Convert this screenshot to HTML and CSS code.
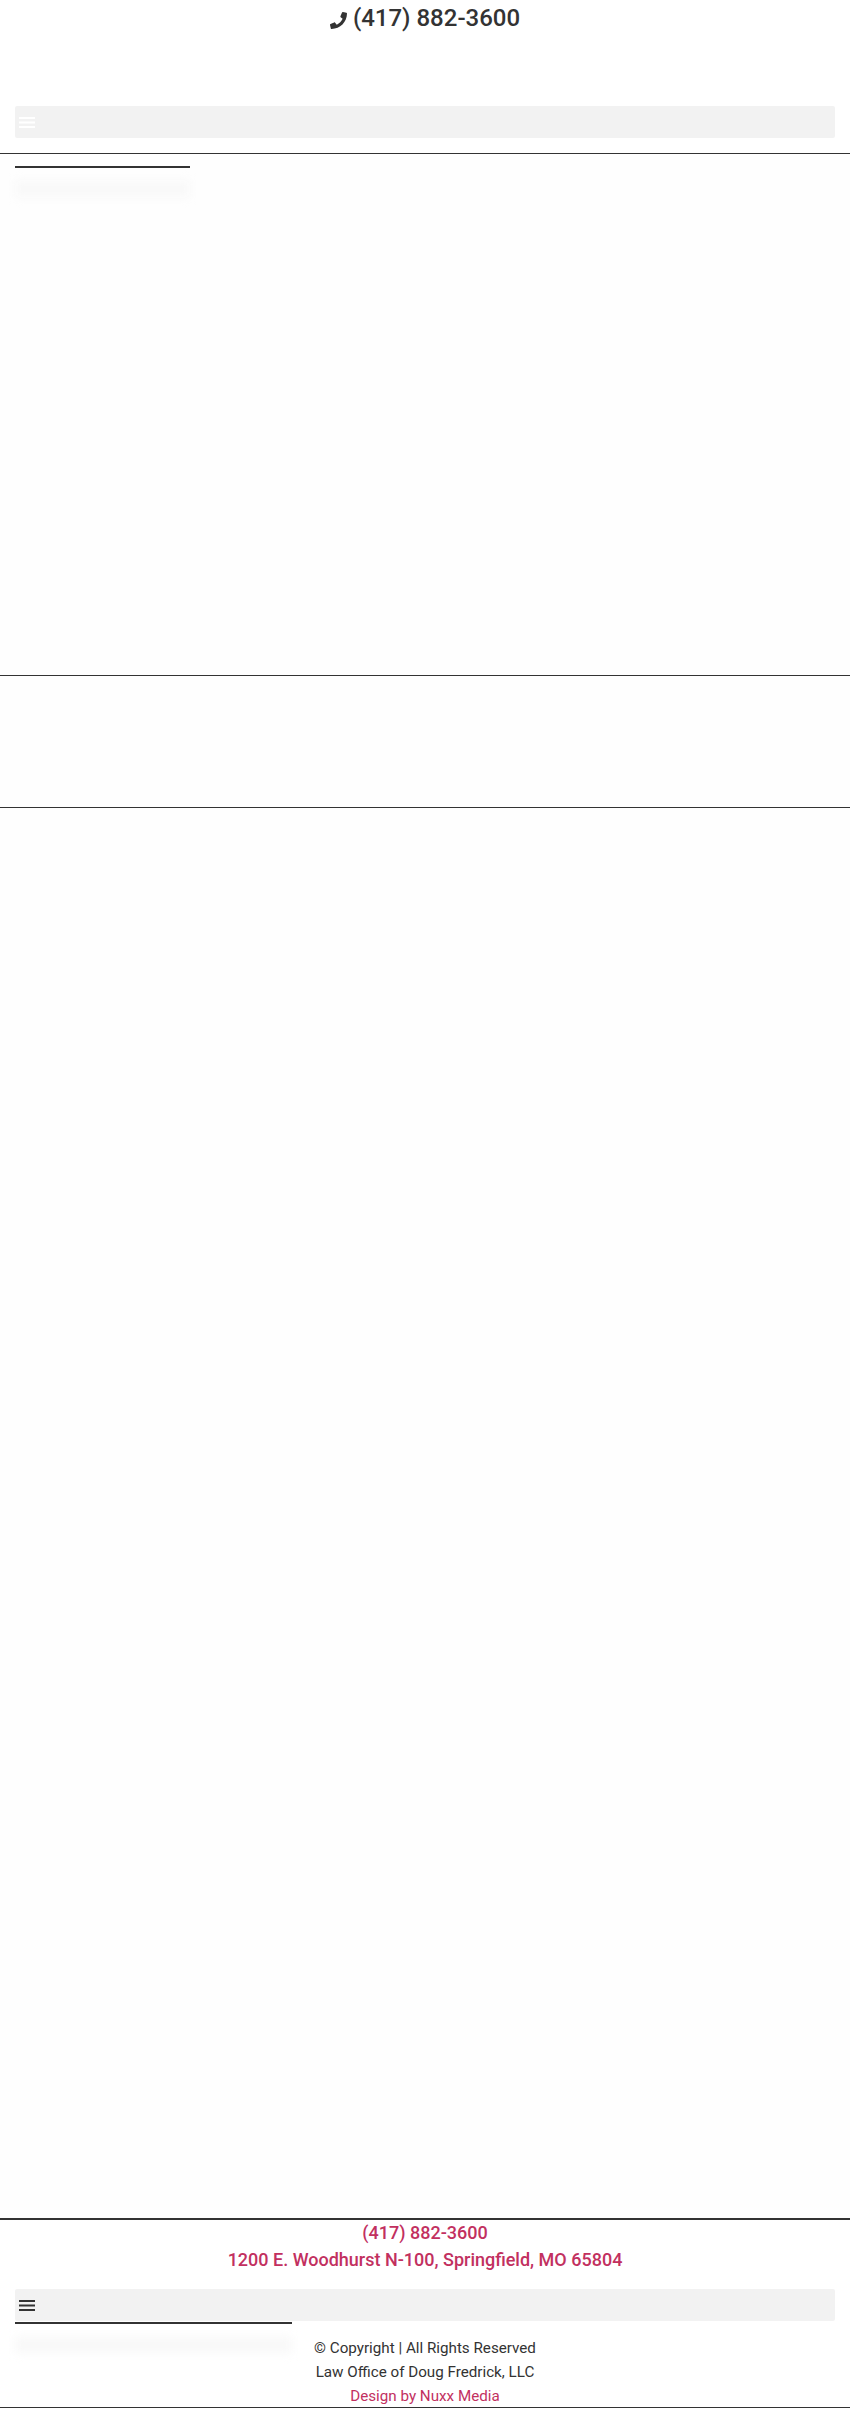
FILE: index.html
```html
<!DOCTYPE html>
<html lang="en">
<head>
<meta charset="UTF-8">
<title>Law Office of Doug Fredrick, LLC</title>
<link rel="stylesheet" href="styles.css">
</head>
<body>
<header class="top-head">
	<a class="top-phone" href="#">
		<svg class="phone-icon" viewBox="0 0 512 512"><path d="M493.4 24.6l-104-24c-11.3-2.6-22.9 3.3-27.5 13.9l-48 112c-4.2 9.8-1.4 21.3 6.9 28l60.6 49.6c-36 76.7-98.9 140.5-177.2 177.2l-49.6-60.6c-6.8-8.3-18.2-11.1-28-6.9l-112 48C3.9 366.5-2 378.1.6 389.4l24 104C27.1 504.2 36.7 512 48 512c256.1 0 464-207.5 464-464 0-11.2-7.7-20.9-18.6-23.4z"/></svg>
		(417) 882-3600
	</a>
</header>
<nav class="top-nav">
	<div class="menu-bar">
		<svg class="menu-icon menu-icon-light" viewBox="0 0 16 11"><rect width="16" height="2"/><rect y="4.5" width="16" height="2"/><rect y="9" width="16" height="2"/></svg>
	</div>
	<div class="dropdown dropdown-top"><div class="dropdown-blur"></div></div>
</nav>
<section class="band band-first"></section>
<section class="band band-second"></section>
<section class="band band-main"></section>
<footer class="foot">
	<div class="foot-contact">
		<a href="#">(417) 882-3600</a>
		<a href="#">1200 E. Woodhurst N-100, Springfield, MO 65804</a>
	</div>
	<div class="foot-nav">
		<div class="menu-bar menu-bar-foot">
			<svg class="menu-icon" viewBox="0 0 16 11"><rect width="16" height="2"/><rect y="4.5" width="16" height="2"/><rect y="9" width="16" height="2"/></svg>
		</div>
		<div class="dropdown dropdown-foot"><div class="dropdown-blur"></div></div>
	</div>
	<div class="foot-copy">
		<p>© Copyright | All Rights Reserved</p>
		<p>Law Office of Doug Fredrick, LLC</p>
		<p><a href="#">Design by Nuxx Media</a></p>
	</div>
</footer>
</body>
</html>
```
FILE: styles.css
```css
body{
	margin: 0;
	background: #fff;
	color: #333;
	font-family: Roboto, "Liberation Sans", sans-serif;
}
a{
	color: #c2305f;
	text-decoration: none;
}
p{
	margin: 0;
}
.top-head{
	height: 106px;
	text-align: center;
}
.top-phone{
	display: inline-flex;
	align-items: center;
	gap: 6px;
	height: 36px;
	font-size: 24px;
	font-weight: 500;
	color: #333;
}
.phone-icon{
	width: 17px;
	height: 17px;
	margin-top: 4px;
	fill: #333;
}
.top-nav{
	position: relative;
	height: 47px;
	border-bottom: 1px solid #333;
}
.menu-bar{
	display: flex;
	align-items: center;
	height: 32px;
	margin: 0 15px;
	padding-left: 4px;
	background: #f2f2f2;
	border-radius: 2px;
}
.menu-icon{
	width: 16px;
	height: 11px;
	fill: #333;
}
.menu-icon-light{
	fill: #fff;
}
.dropdown{
	position: absolute;
	left: 15px;
	border-top: 2px solid #333;
}
.dropdown-top{
	top: 60px;
	width: 175px;
}
.dropdown-foot{
	top: 33px;
	width: 277px;
}
.dropdown-blur{
	height: 18px;
	margin-top: 12px;
	background: #f9f9f9;
	filter: blur(4px);
}
.band{
	border-bottom: 1px solid #333;
}
.band-first{
	height: 521px;
	background: #fefefe;
}
.band-second{
	height: 131px;
	background: #fefefe;
}
.band-main{
	height: 1410px;
	background: #fefefe;
	border-bottom: 2px solid #333;
}
.foot{
	height: 188px;
	border-bottom: 1px solid #333;
	text-align: center;
}
.foot-contact{
	display: flex;
	flex-direction: column;
	height: 70px;
	margin-top: -1px;
	font-size: 18px;
	font-weight: 500;
	line-height: 27px;
}
.foot-nav{
	position: relative;
}
.foot-copy{
	padding-top: 15px;
	font-size: 15.2px;
	line-height: 24px;
}
```
